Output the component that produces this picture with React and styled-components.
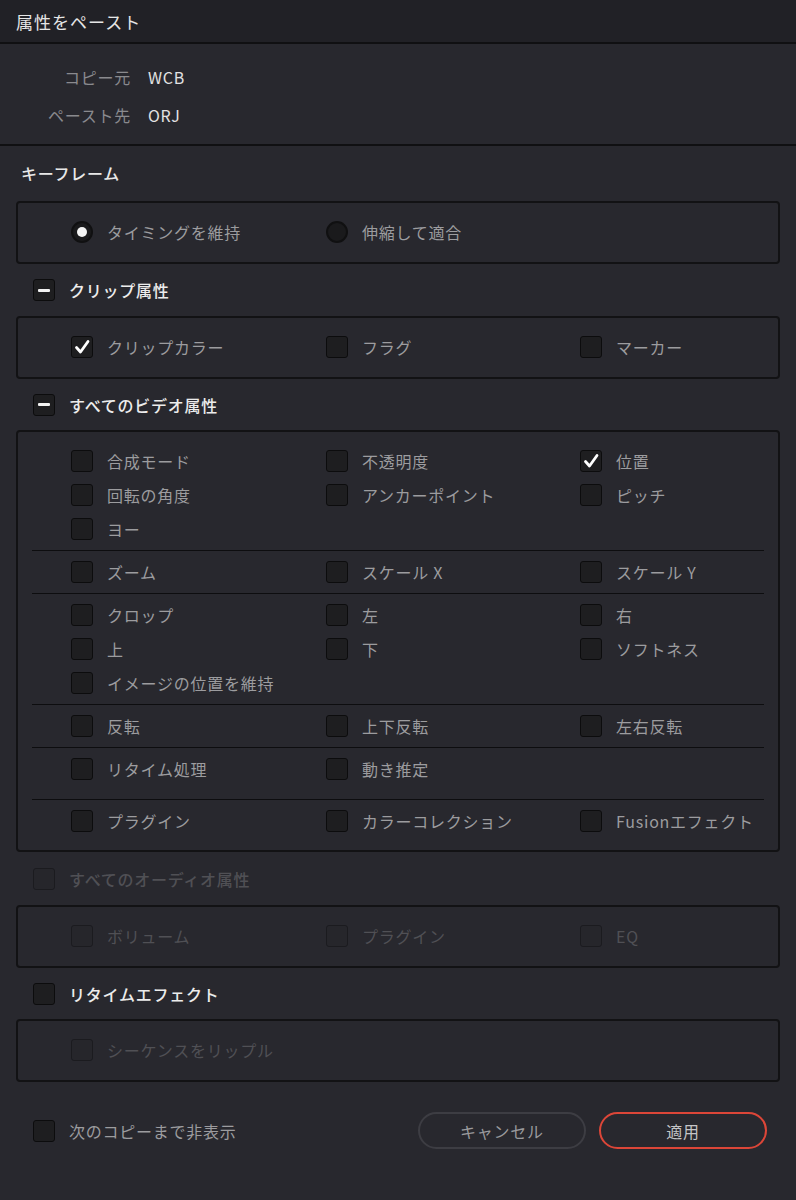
import React from "react";
import styled, { createGlobalStyle, css } from "styled-components";

const GlobalStyle = createGlobalStyle`
  body {
    margin: 0;
    background: #28282e;
    font-family: "Noto Sans CJK JP", "Noto Sans", sans-serif;
    -webkit-font-smoothing: antialiased;
  }
`;

const Dialog = styled.div`
  width: 796px;
  min-height: 1200px;
  background: #28282e;
  letter-spacing: 0.75px;
`;

const TitleBar = styled.div`
  height: 42px;
  display: flex;
  align-items: center;
  padding-left: 16px;
  background: #212126;
  border-bottom: 2px solid #101012;
  color: #e6e6e6;
  font-size: 17px;
  letter-spacing: 1px;
`;

const InfoBlock = styled.div`
  display: grid;
  grid-template-columns: 131px auto;
  column-gap: 17px;
  row-gap: 14px;
  padding: 21px 0 17px;
  border-bottom: 2px solid #101012;
  font-size: 16px;
  line-height: 24px;
`;

const InfoLabel = styled.div`
  text-align: right;
  color: #8a8a8e;
`;

const InfoValue = styled.div`
  color: #e2e2e2;
`;

const Content = styled.div`
  padding: 0 16px;
`;

const GroupTitle = styled.div`
  height: 55px;
  display: flex;
  align-items: center;
  padding: 0 0 2px 5px;
  box-sizing: border-box;
  color: #e8e8e8;
  font-size: 16px;
  font-weight: 500;
`;

const SectionHeader = styled.div`
  height: ${(p) => p.$h || 51}px;
  display: flex;
  align-items: center;
  gap: 14px;
  padding-left: 17px;
  font-size: 16px;
  font-weight: 500;
  color: ${(p) => (p.$disabled ? "#505055" : "#ececec")};
`;

const Panel = styled.div`
  border: 2px solid #121214;
  border-radius: 4px;
  padding: ${(p) => (p.$multi ? "8px 0 8px" : "12px 0 13px")};
`;

const Section = styled.div`
  padding: 4px 0 ${(p) => p.$extra || 4}px;
  & + & {
    border-top: 1px solid #0d0d0f;
  }
  margin: 0 14px;
`;

const Grid = styled.div`
  display: grid;
  grid-template-columns: 255px 254px auto;
  grid-auto-rows: 34px;
  padding-left: ${(p) => p.$pad ?? 39}px;
`;

const Item = styled.div`
  display: flex;
  align-items: center;
  gap: 14px;
  font-size: 16px;
  white-space: nowrap;
  color: ${(p) => (p.$disabled ? "#505055" : "#9c9c9f")};
`;

const Box = styled.div`
  width: 22px;
  height: 22px;
  box-sizing: border-box;
  flex: none;
  border-radius: 3px;
  display: flex;
  align-items: center;
  justify-content: center;
  ${(p) =>
    p.$disabled
      ? css`
          background: #26262b;
          border: 1px solid #1b1b1f;
        `
      : css`
          background: #1e1e20;
          border: 1px solid #0c0c0d;
        `}
`;

const Minus = styled.span`
  width: 12px;
  height: 3px;
  background: #f2f2f2;
  border-radius: 1px;
`;

const Radio = styled.div`
  width: 22px;
  height: 22px;
  box-sizing: border-box;
  flex: none;
  border-radius: 50%;
  background: #1a1a1c;
  border: 2px solid #101011;
  display: flex;
  align-items: center;
  justify-content: center;
`;

const Dot = styled.span`
  width: 10px;
  height: 10px;
  border-radius: 50%;
  background: #f4f4f4;
`;

const Footer = styled.div`
  display: flex;
  align-items: center;
  padding: 30px 29px 0 33px;
`;

const FooterCheck = styled(Item)`
  flex: 1;
  color: #9c9c9f;
`;

const Button = styled.button`
  width: 168px;
  height: 37px;
  border-radius: 19px;
  background: transparent;
  font-family: inherit;
  font-size: 16px;
  letter-spacing: 0.75px;
  cursor: pointer;
  border: ${(p) => (p.$primary ? "2px solid #dc4638" : "2px solid #3d3d43")};
  color: ${(p) => (p.$primary ? "#c4c4c6" : "#9a9a9d")};
  & + & {
    margin-left: 13px;
  }
`;

const Check = ({ state, disabled }) => (
  <Box $disabled={disabled}>
    {state === "checked" && (
      <svg width="18" height="18" viewBox="0 0 18 18">
        <path
          d="M3.5 9.5 L7.5 14 L15 3.5"
          fill="none"
          stroke="#fff"
          strokeWidth="2.8"
          strokeLinecap="round"
          strokeLinejoin="round"
        />
      </svg>
    )}
    {state === "mixed" && <Minus />}
  </Box>
);

const Option = ({ label, checked, disabled }) => (
  <Item $disabled={disabled}>
    <Check state={checked ? "checked" : null} disabled={disabled} />
    {label}
  </Item>
);

const VIDEO_SECTIONS = [
  {
    items: [
      ["合成モード"],
      ["不透明度"],
      ["位置", true],
      ["回転の角度"],
      ["アンカーポイント"],
      ["ピッチ"],
      ["ヨー"],
    ],
  },
  { items: [["ズーム"], ["スケール X"], ["スケール Y"]] },
  {
    items: [
      ["クロップ"],
      ["左"],
      ["右"],
      ["上"],
      ["下"],
      ["ソフトネス"],
      ["イメージの位置を維持"],
    ],
  },
  { items: [["反転"], ["上下反転"], ["左右反転"]] },
  { items: [["リタイム処理"], ["動き推定"]], extra: 13 },
  { items: [["プラグイン"], ["カラーコレクション"], ["Fusionエフェクト"]] },
];

const App = () => (
  <>
    <GlobalStyle />
    <Dialog>
      <TitleBar>属性をペースト</TitleBar>
      <InfoBlock>
        <InfoLabel>コピー元</InfoLabel>
        <InfoValue>WCB</InfoValue>
        <InfoLabel>ペースト先</InfoLabel>
        <InfoValue>ORJ</InfoValue>
      </InfoBlock>

      <Content>
        <GroupTitle>キーフレーム</GroupTitle>
        <Panel>
          <Grid $pad={53}>
            <Item>
              <Radio>
                <Dot />
              </Radio>
              タイミングを維持
            </Item>
            <Item>
              <Radio />
              伸縮して適合
            </Item>
          </Grid>
        </Panel>

        <SectionHeader $h={52}>
          <Check state="mixed" />
          クリップ属性
        </SectionHeader>
        <Panel>
          <Grid $pad={53}>
            <Option label="クリップカラー" checked />
            <Option label="フラグ" />
            <Option label="マーカー" />
          </Grid>
        </Panel>

        <SectionHeader>
          <Check state="mixed" />
          すべてのビデオ属性
        </SectionHeader>
        <Panel $multi>
          {VIDEO_SECTIONS.map((sec, i) => (
            <Section key={i} $extra={sec.extra}>
              <Grid>
                {sec.items.map(([label, checked]) => (
                  <Option key={label} label={label} checked={checked} />
                ))}
              </Grid>
            </Section>
          ))}
        </Panel>

        <SectionHeader $h={53} $disabled>
          <Check disabled />
          すべてのオーディオ属性
        </SectionHeader>
        <Panel>
          <Grid $pad={53}>
            <Option label="ボリューム" disabled />
            <Option label="プラグイン" disabled />
            <Option label="EQ" disabled />
          </Grid>
        </Panel>

        <SectionHeader>
          <Check />
          リタイムエフェクト
        </SectionHeader>
        <Panel>
          <Grid $pad={53}>
            <Option label="シーケンスをリップル" disabled />
          </Grid>
        </Panel>
      </Content>

      <Footer>
        <FooterCheck>
          <Check />
          次のコピーまで非表示
        </FooterCheck>
        <Button>キャンセル</Button>
        <Button $primary>適用</Button>
      </Footer>
    </Dialog>
  </>
);

export default App;
